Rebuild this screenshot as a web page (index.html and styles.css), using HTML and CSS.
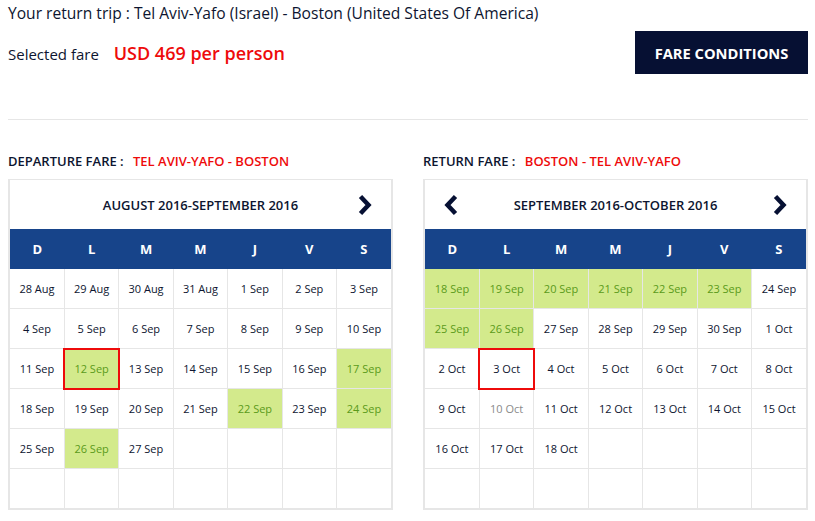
FILE: index.html
```html
<!DOCTYPE html>
<html lang="en">
<head>
  <meta charset="utf-8">
  <title>Select your dates</title>
  <link rel="stylesheet" href="styles.css">
</head>
<body>
  <div class="page">
    <h1 class="trip-title">Your return trip : Tel Aviv-Yafo (Israel) - Boston (United States Of America)</h1>

    <div class="fare-row">
      <p class="selected-fare">Selected fare <span class="price">USD 469 per person</span></p>
      <button class="btn-conditions">FARE CONDITIONS</button>
    </div>

    <hr class="divider">

    <div class="fares">
      <section class="fare">
        <h3 class="fare-label">DEPARTURE FARE : <span class="route">TEL AVIV-YAFO - BOSTON</span></h3>
        <div class="calendar">
          <div class="cal-head">
            <span class="nav-spacer"></span>
            <span class="cal-month">AUGUST 2016-SEPTEMBER 2016</span>
            <a class="nav" href="#"><svg width="14" height="22" viewBox="0 0 14 22"><path d="M2.5 2.5 L10.5 11 L2.5 19.5" /></svg></a>
          </div>
          <table class="days">
            <thead>
              <tr><th>D</th><th>L</th><th>M</th><th>M</th><th>J</th><th>V</th><th>S</th></tr>
            </thead>
            <tbody>
              <tr><td>28 Aug</td><td>29 Aug</td><td>30 Aug</td><td>31 Aug</td><td>1 Sep</td><td>2 Sep</td><td>3 Sep</td></tr>
              <tr><td>4 Sep</td><td>5 Sep</td><td>6 Sep</td><td>7 Sep</td><td>8 Sep</td><td>9 Sep</td><td>10 Sep</td></tr>
              <tr><td>11 Sep</td><td class="avail selected">12 Sep</td><td>13 Sep</td><td>14 Sep</td><td>15 Sep</td><td>16 Sep</td><td class="avail">17 Sep</td></tr>
              <tr><td>18 Sep</td><td>19 Sep</td><td>20 Sep</td><td>21 Sep</td><td class="avail">22 Sep</td><td>23 Sep</td><td class="avail">24 Sep</td></tr>
              <tr><td>25 Sep</td><td class="avail">26 Sep</td><td>27 Sep</td><td></td><td></td><td></td><td></td></tr>
              <tr><td></td><td></td><td></td><td></td><td></td><td></td><td></td></tr>
            </tbody>
          </table>
        </div>
      </section>

      <section class="fare">
        <h3 class="fare-label">RETURN FARE : <span class="route">BOSTON - TEL AVIV-YAFO</span></h3>
        <div class="calendar">
          <div class="cal-head">
            <a class="nav" href="#"><svg width="14" height="22" viewBox="0 0 14 22"><path d="M11.5 2.5 L3.5 11 L11.5 19.5" /></svg></a>
            <span class="cal-month">SEPTEMBER 2016-OCTOBER 2016</span>
            <a class="nav" href="#"><svg width="14" height="22" viewBox="0 0 14 22"><path d="M2.5 2.5 L10.5 11 L2.5 19.5" /></svg></a>
          </div>
          <table class="days">
            <thead>
              <tr><th>D</th><th>L</th><th>M</th><th>M</th><th>J</th><th>V</th><th>S</th></tr>
            </thead>
            <tbody>
              <tr><td class="avail">18 Sep</td><td class="avail">19 Sep</td><td class="avail">20 Sep</td><td class="avail">21 Sep</td><td class="avail">22 Sep</td><td class="avail">23 Sep</td><td>24 Sep</td></tr>
              <tr><td class="avail">25 Sep</td><td class="avail">26 Sep</td><td>27 Sep</td><td>28 Sep</td><td>29 Sep</td><td>30 Sep</td><td>1 Oct</td></tr>
              <tr><td>2 Oct</td><td class="selected">3 Oct</td><td>4 Oct</td><td>5 Oct</td><td>6 Oct</td><td>7 Oct</td><td>8 Oct</td></tr>
              <tr><td>9 Oct</td><td class="muted">10 Oct</td><td>11 Oct</td><td>12 Oct</td><td>13 Oct</td><td>14 Oct</td><td>15 Oct</td></tr>
              <tr><td>16 Oct</td><td>17 Oct</td><td>18 Oct</td><td></td><td></td><td></td><td></td></tr>
              <tr><td></td><td></td><td></td><td></td><td></td><td></td><td></td></tr>
            </tbody>
          </table>
        </div>
      </section>
    </div>
  </div>
</body>
</html>
```

FILE: styles.css
```css
:root {
  font-family: "Open Sans", "Noto Sans", sans-serif;
  color: #0d1530;
}

body {
  margin: 0;
  background: #fff;
}

.page {
  padding: 0 7px 0 8px;
}

.trip-title {
  margin: 0;
  padding-top: 1px;
  font-size: 15.6px;
  font-weight: normal;
  line-height: 24px;
}

.fare-row {
  display: flex;
  justify-content: space-between;
  align-items: center;
  margin-top: 6px;
}

.selected-fare {
  margin: 0;
  font-size: 15px;
}

.price {
  margin-left: 11px;
  font-size: 18px;
  font-weight: 600;
  color: #ee0b0b;
}

.btn-conditions {
  width: 173px;
  height: 43px;
  border: 0;
  background: #061033;
  color: #fff;
  font-family: inherit;
  font-size: 14.7px;
  font-weight: 700;
}

.divider {
  margin: 45px 0 0;
  border: 0;
  border-top: 1px solid #e6e6e6;
}

.fares {
  display: grid;
  grid-template-columns: 1fr 1fr;
  gap: 30px;
  margin-top: 33px;
}

.fare-label {
  margin: 0 0 10px;
  font-size: 13px;
  font-weight: 600;
  line-height: 16px;
}

.route {
  margin-left: 6px;
  color: #ee0b0b;
}

.calendar {
  border: 2px solid #e6e6e6;
  border-top-width: 1px;
}

.cal-head {
  display: flex;
  justify-content: space-between;
  align-items: center;
  height: 49px;
  padding: 0 19px;
}

.nav,
.nav-spacer {
  display: block;
  width: 14px;
  height: 22px;
}

.nav path {
  fill: none;
  stroke: #061033;
  stroke-width: 4.5;
}

.cal-month {
  font-size: 13px;
  font-weight: 600;
}

.days {
  width: 100%;
  border-collapse: collapse;
  table-layout: fixed;
}

.days th {
  height: 40px;
  padding: 0;
  background: #17448a;
  color: #fff;
  font-size: 13px;
  font-weight: 700;
}

.days td {
  height: 39px;
  padding: 0;
  border: 1px solid #e6e6e6;
  text-align: center;
  font-size: 11px;
}

.days tr td:first-child {
  border-left: 0;
}

.days tr td:last-child {
  border-right: 0;
}

.days tbody tr:first-child td {
  border-top: 0;
}

.days tbody tr:last-child td {
  border-bottom: 0;
}

.days td.avail {
  background: #d3ea8c;
  color: #5a9a1a;
}

.days td.selected {
  outline: 2px solid #ee0b0b;
  outline-offset: -1px;
}

.days td.muted {
  color: #8a8a8a;
}
```
